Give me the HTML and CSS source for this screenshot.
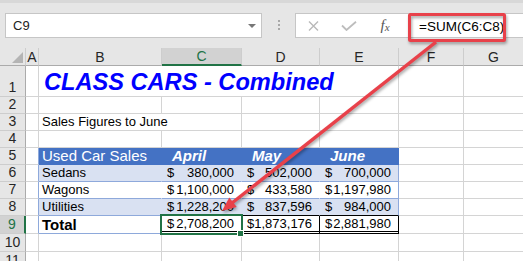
FILE: index.html
```html
<!DOCTYPE html>
<html lang="en">
<head>
    <meta charset="UTF-8">
    <meta name="viewport" content="width=device-width, initial-scale=1.0">
    <title>Class Cars - Combined</title>
    <link rel="stylesheet" href="styles.css">
</head>
<body>
    <!-- Formula bar -->
    <div class="formula-bar">
        <div class="name-box"><span>C9</span><span class="drop"></span></div>
        <div class="grip"><i></i><i></i><i></i></div>
        <div class="formula-box">
            <span class="fb-btn">
                <svg width="11" height="10" viewBox="0 0 11 10"><path d="M1 0.5 L10 9.5 M10 0.5 L1 9.5" stroke="#b9b9b9" stroke-width="1.4" fill="none"/></svg>
            </span>
            <span class="fb-btn">
                <svg width="16" height="10" viewBox="0 0 16 10"><path d="M1 4.5 L5.5 9 L15 0.8" stroke="#bdbdbd" stroke-width="1.8" fill="none"/></svg>
            </span>
            <span class="fb-btn fx">f<span>x</span></span>
            <span class="formula">=SUM(C6:C8)</span>
        </div>
    </div>

    <!-- Worksheet -->
    <div class="sheet">
        <div class="hd corner"><span class="tri"></span></div>
        <div class="hd">A</div>
        <div class="hd">B</div>
        <div class="hd hd-sel">C</div>
        <div class="hd">D</div>
        <div class="hd">E</div>
        <div class="hd">F</div>
        <div class="hd">G</div>

        <div class="rh">1</div>
        <div class="c"></div>
        <div class="c title">CLASS CARS - Combined</div>
        <div class="c"></div>
        <div class="c"></div>

        <div class="rh">2</div>
        <div class="c"></div><div class="c"></div><div class="c"></div><div class="c"></div>
        <div class="c"></div><div class="c"></div><div class="c"></div>

        <div class="rh">3</div>
        <div class="c"></div>
        <div class="c subtitle">Sales Figures to June</div>
        <div class="c"></div><div class="c"></div><div class="c"></div><div class="c"></div>

        <div class="rh">4</div>
        <div class="c"></div><div class="c"></div><div class="c"></div><div class="c"></div>
        <div class="c"></div><div class="c"></div><div class="c"></div>

        <div class="rh">5</div>
        <div class="c tl"></div>
        <div class="c th">Used Car Sales</div>
        <div class="c th mo">April</div>
        <div class="c th mo">May</div>
        <div class="c th mo">June</div>
        <div class="c"></div><div class="c"></div>

        <div class="rh">6</div>
        <div class="c tl"></div>
        <div class="c bd">Sedans</div>
        <div class="c bd nm"><span>$</span><span>380,000</span></div>
        <div class="c bd nm"><span>$</span><span>502,000</span></div>
        <div class="c bd nm re"><span>$</span><span>700,000</span></div>
        <div class="c"></div><div class="c"></div>

        <div class="rh">7</div>
        <div class="c tl"></div>
        <div class="c wr">Wagons</div>
        <div class="c wr nm"><span>$</span><span>1,100,000</span></div>
        <div class="c wr nm"><span>$</span><span>433,580</span></div>
        <div class="c wr nm re"><span>$</span><span>1,197,980</span></div>
        <div class="c"></div><div class="c"></div>

        <div class="rh">8</div>
        <div class="c tl"></div>
        <div class="c bd">Utilities</div>
        <div class="c bd nm over"><span>$</span><span>1,228,200</span></div>
        <div class="c bd nm over"><span>$</span><span>837,596</span></div>
        <div class="c bd nm re over"><span>$</span><span>984,000</span></div>
        <div class="c"></div><div class="c"></div>

        <div class="rh rh-sel">9</div>
        <div class="c tl"></div>
        <div class="c total-label">Total</div>
        <div class="c nm tot active"><span>$</span><span>2,708,200</span></div>
        <div class="c nm tot"><span>$</span><span>1,873,176</span></div>
        <div class="c nm tot"><span>$</span><span>2,881,980</span></div>
        <div class="c"></div><div class="c"></div>

        <div class="rh">10</div>
        <div class="c"></div><div class="c"></div><div class="c"></div><div class="c"></div>
        <div class="c"></div><div class="c"></div><div class="c"></div>

        <div class="rh">11</div>
        <div class="c"></div><div class="c"></div><div class="c"></div><div class="c"></div>
        <div class="c"></div><div class="c"></div><div class="c"></div>
    </div>

    <!-- Callout: box round the formula and arrow to C9 -->
    <svg class="callout" width="523" height="261" viewBox="0 0 523 261">
        <g class="shadowed">
            <rect x="409.5" y="14.5" width="95" height="26" rx="1" fill="none" stroke="#e8414a" stroke-width="3"/>
            <line x1="436" y1="42" x2="232" y2="203" stroke="#e8414a" stroke-width="3.5"/>
            <polygon points="222,211 236.7,207 229.3,197.6" fill="#e8414a"/>
        </g>
    </svg>
</body>
</html>
```

FILE: styles.css
```css
body {
    margin: 0;
    font-family: "Liberation Sans", Arial, sans-serif;
    background-color: #fff;
    width: 523px;
    height: 261px;
    overflow: hidden;
    position: relative;
}

/* Formula bar */
.formula-bar {
    height: 48px;
    box-sizing: border-box;
    background: #e6e6e6;
    border-top: 3px solid #d8d8d8;
    padding-top: 10px;
    display: flex;
    align-items: flex-start;
}
.name-box {
    margin-left: 5px;
    width: 257px;
    height: 25px;
    box-sizing: border-box;
    background: #fff;
    border: 1px solid #c6c6c6;
    display: flex;
    align-items: center;
    justify-content: space-between;
    padding: 0 5px 0 7px;
    font-size: 13px;
    color: #222;
}
.drop {
    width: 0;
    height: 0;
    border-left: 4px solid transparent;
    border-right: 4px solid transparent;
    border-top: 4px solid #777;
}
.grip {
    width: 33px;
    padding-top: 7px;
    display: flex;
    flex-direction: column;
    align-items: center;
    gap: 2px;
}
.grip i {
    width: 2px;
    height: 2px;
    background: #a8a8a8;
}
.formula-box {
    flex: 1;
    height: 25px;
    box-sizing: border-box;
    background: #fff;
    border: 1px solid #c6c6c6;
    border-right: none;
    display: flex;
    align-items: center;
}
.fb-btn {
    width: 36px;
    display: flex;
    justify-content: center;
    align-items: center;
}
.fb-btn:first-child {
    width: 35px;
}
.fx {
    font-family: "Liberation Serif", serif;
    font-style: italic;
    font-size: 15px;
    color: #555;
}
.fx span {
    font-size: 11px;
    position: relative;
    top: 1px;
}
.formula {
    padding-left: 16px;
    padding-top: 2px;
    font-size: 13.5px;
    color: #000;
}

/* Worksheet grid */
.sheet {
    display: grid;
    grid-template-columns: 26px 13px 123px 80px 78px 79px 65px 60px;
    grid-template-rows: 18px 31px repeat(7, 17px) 18px 18px 18px;
}
.sheet > div {
    box-sizing: border-box;
    border-right: 1px solid #d4d4d4;
    border-bottom: 1px solid #d4d4d4;
    display: flex;
    align-items: flex-end;
    white-space: nowrap;
    font-size: 13px;
    line-height: 15px;
    padding: 0 0 1px 3px;
    color: #000;
}
.sheet > .hd {
    background: #e6e6e6;
    justify-content: center;
    padding: 0;
    font-size: 14px;
    line-height: 16px;
    color: #262626;
    border-right-color: #cdcdcd;
    border-bottom-color: #ababab;
}
.sheet > .corner {
    justify-content: flex-end;
    padding: 0 2px 2px 0;
}
.tri {
    width: 0;
    height: 0;
    border-left: 11px solid transparent;
    border-bottom: 11px solid #b4b4b4;
}
.sheet > .hd-sel {
    background: #d2d2d2;
    color: #217346;
    border-bottom: 2px solid #217346;
}
.sheet > .rh {
    background: #e6e6e6;
    justify-content: center;
    padding: 0 0 1px 0;
    font-size: 14px;
    line-height: 16px;
    color: #262626;
    border-right-color: #ababab;
    border-bottom-color: #cdcdcd;
}
.sheet > .rh-sel {
    background: #d2d2d2;
    color: #217346;
    border-right: 2px solid #217346;
}

.sheet > .title {
    grid-column: span 4;
    font-size: 23.6px;
    line-height: 26px;
    font-weight: bold;
    font-style: italic;
    color: #0000ff;
    padding: 0 0 1px 5px;
}
.sheet > .subtitle {
    grid-column: span 2;
}

/* Sales table */
.sheet > .tl {
    border-right-color: #8ea9db;
}
.sheet > .th {
    background: #4472c4;
    color: #fff;
    border-color: #4472c4;
    font-size: 15px;
    line-height: 16px;
    padding-bottom: 0;
}
.sheet > .mo {
    font-weight: bold;
    font-style: italic;
    padding-left: 10px;
}
.sheet > .bd {
    background: #d9e1f2;
    border-right-color: #d9e1f2;
    border-bottom-color: #8ea9db;
}
.sheet > .wr {
    border-right-color: #fff;
    border-bottom-color: #8ea9db;
}
.sheet > .nm {
    justify-content: space-between;
    padding: 0 7px 1px 5px;
}
.sheet > .re {
    border-right-color: #8ea9db;
}
.sheet > .over {
    border-bottom-color: #000;
}
.sheet > .total-label {
    font-weight: bold;
    font-size: 15px;
    line-height: 16px;
    padding-bottom: 0;
    border-bottom-color: #8ea9db;
}
.sheet > .tot {
    border-right-color: #000;
    border-bottom: 3px double #000;
    padding-bottom: 0;
}

/* Active cell C9 */
.sheet > .active {
    position: relative;
}
.active::before {
    content: "";
    position: absolute;
    left: -2px;
    top: -2px;
    right: -2px;
    bottom: -4px;
    border: 2px solid #217346;
}
.active::after {
    content: "";
    position: absolute;
    right: -3px;
    bottom: -6px;
    width: 5px;
    height: 5px;
    background: #217346;
    border: 1px solid #fff;
}

/* Red callout over the sheet */
.callout {
    position: absolute;
    left: 0;
    top: 0;
    z-index: 5;
    pointer-events: none;
}
.shadowed {
    filter: drop-shadow(1px 2px 1.5px rgba(0, 0, 0, 0.35));
}
```
